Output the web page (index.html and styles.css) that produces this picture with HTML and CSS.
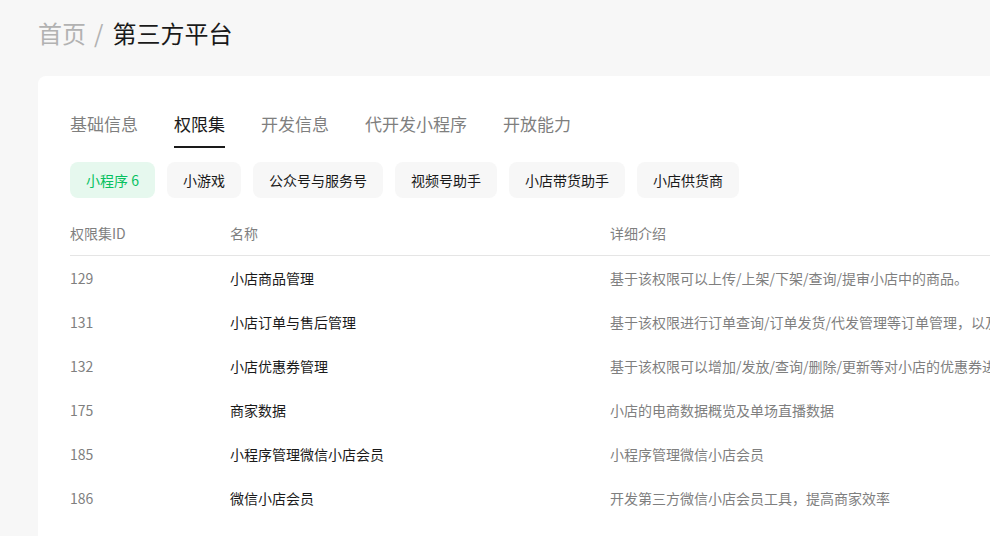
FILE: index.html
```html
<!DOCTYPE html>
<html lang="zh-CN">
<head>
    <meta charset="UTF-8">
    <meta name="viewport" content="width=device-width, initial-scale=1.0">
    <title>第三方平台</title>
    <link rel="stylesheet" href="styles.css">
</head>
<body>
    <div class="page">
        <div class="breadcrumb">
            <span class="crumb-link">首页</span>
            <span class="crumb-sep">/</span>
            <span class="crumb-current">第三方平台</span>
        </div>

        <div class="card">
            <!-- 顶部标签 -->
            <div class="tabs">
                <div class="tab">基础信息</div>
                <div class="tab active">权限集</div>
                <div class="tab">开发信息</div>
                <div class="tab">代开发小程序</div>
                <div class="tab">开放能力</div>
            </div>

            <div class="chips">
                <div class="chip active">小程序 6</div>
                <div class="chip">小游戏</div>
                <div class="chip">公众号与服务号</div>
                <div class="chip">视频号助手</div>
                <div class="chip">小店带货助手</div>
                <div class="chip">小店供货商</div>
            </div>

            <table class="perm-table">
                <thead>
                    <tr>
                        <th class="col-id">权限集ID</th>
                        <th class="col-name">名称</th>
                        <th>详细介绍</th>
                    </tr>
                </thead>
                <tbody>
                    <tr>
                        <td class="col-id">129</td>
                        <td class="col-name">小店商品管理</td>
                        <td class="desc">基于该权限可以上传/上架/下架/查询/提审小店中的商品。</td>
                    </tr>
                    <tr>
                        <td class="col-id">131</td>
                        <td class="col-name">小店订单与售后管理</td>
                        <td class="desc">基于该权限进行订单查询/订单发货/代发管理等订单管理，以及售后管理</td>
                    </tr>
                    <tr>
                        <td class="col-id">132</td>
                        <td class="col-name">小店优惠券管理</td>
                        <td class="desc">基于该权限可以增加/发放/查询/删除/更新等对小店的优惠券进行管理</td>
                    </tr>
                    <tr>
                        <td class="col-id">175</td>
                        <td class="col-name">商家数据</td>
                        <td class="desc">小店的电商数据概览及单场直播数据</td>
                    </tr>
                    <tr>
                        <td class="col-id">185</td>
                        <td class="col-name">小程序管理微信小店会员</td>
                        <td class="desc">小程序管理微信小店会员</td>
                    </tr>
                    <tr>
                        <td class="col-id">186</td>
                        <td class="col-name">微信小店会员</td>
                        <td class="desc">开发第三方微信小店会员工具，提高商家效率</td>
                    </tr>
                </tbody>
            </table>
        </div>
    </div>
</body>
</html>
```

FILE: styles.css
```css
html, body { margin: 0; padding: 0; }
body { background: #f7f7f7; font-family: "Noto Sans CJK SC", "Liberation Sans", sans-serif; color: #1a1a1a; overflow: hidden; }
.page { padding: 17px 0 0 38px; width: 1200px; }

.breadcrumb { font-size: 24px; line-height: 32px; display: flex; align-items: center; }
.crumb-link, .crumb-sep { color: #b2b2b2; }
.crumb-sep { margin: 0 9px 0 8px; }
.crumb-current { color: #1a1a1a; }

.card { margin-top: 27px; background: #fff; border-radius: 8px; padding: 36px 32px 40px; }

.tabs { display: flex; gap: 36px; }
.tab { font-size: 17px; line-height: 24px; padding-bottom: 10px; color: #7f7f7f; border-bottom: 2px solid transparent; }
.tab.active { color: #1a1a1a; border-bottom-color: #1a1a1a; }

.chips { display: flex; gap: 12px; margin-top: 14px; }
.chip { height: 36px; line-height: 36px; padding: 0 16px; font-size: 14px; background: #f7f7f7; border-radius: 8px; color: #1a1a1a; }
.chip.active { background: #e6f8ee; color: #07c160; }

.perm-table { border-collapse: collapse; margin-top: 12px; font-size: 14px; white-space: nowrap; }
.perm-table th { text-align: left; font-weight: normal; color: #7f7f7f; height: 45px; padding: 0; border-bottom: 1px solid #e5e5e5; }
.perm-table td { height: 44px; padding: 0; }
.col-id { width: 160px; }
.col-name { width: 380px; }
td.col-id { color: #7f7f7f; }
td.col-name { color: #1a1a1a; }
.desc { color: #7f7f7f; }
```
